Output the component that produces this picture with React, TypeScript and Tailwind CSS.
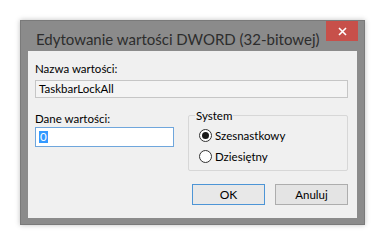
import React from 'react';

const Radio = ({ checked, label }: { checked?: boolean; label: string }) => (
  <div className="flex items-center h-[15px]">
    <span className="w-[13px] h-[13px] rounded-full border border-[#333] bg-white flex items-center justify-center">
      {checked && <span className="w-[7px] h-[7px] rounded-full bg-[#1a1a1a]" />}
    </span>
    <span className="ml-[3px] text-[11.5px] leading-[15px] text-[#000]">{label}</span>
  </div>
);

export default function App() {
  return (
    <div className="w-[385px] h-[246px] bg-white pt-[20px] pl-[20px]" style={{ fontFamily: 'Lato, "Liberation Sans", sans-serif' }}>
      <div className="w-[345px] h-[205px] bg-[#8b8b8b] border border-[#7a7a7a] shadow-[0_0_5px_rgba(0,0,0,0.25)] flex flex-col">
        {/* title bar */}
        <div className="h-[30px] flex items-start">
          <div className="pl-[15px] pt-[8px] text-[15px] leading-[20px] text-[#2d2d2d] flex-1 whitespace-nowrap">
            Edytowanie wartości DWORD (32-bitowej)
          </div>
          <div className="w-[32px] h-[20px] bg-[#c7504a] mr-[6px] flex items-center justify-center shrink-0">
            <svg width="9" height="9" viewBox="0 0 9 9">
              <path d="M1 1L8 8M8 1L1 8" stroke="#fff" strokeWidth="1.6" />
            </svg>
          </div>
        </div>
        {/* client area */}
        <div className="mx-[7px] h-[167px] bg-[#f0f0f0] pl-[7px] pr-[9px] pt-[10px] text-[11.5px]">
          <div className="leading-[15px] text-black">Nazwa wartości:</div>
          <div className="mt-[4px] h-[18px] border border-[#c6c6c6] bg-[#f4f4f4] px-[3px] leading-[16px] text-black">
            TaskbarLockAll
          </div>
          <div className="flex items-start">
            <div className="w-[139px] mt-[13px]">
              <div className="leading-[15px] text-black">Dane wartości:</div>
              <div className="mt-[1px] h-[20px] border border-[#6fa6dc] bg-white px-[3px] flex items-center">
                <span className="bg-[#3399ff] text-white leading-[12px] px-[1px]">0</span>
              </div>
            </div>
            <div className="ml-[14px] mt-[17px] relative w-[160px] h-[56px] border border-[#d7d7d7] rounded-[2px]">
              <span className="absolute -top-[8px] left-[6px] bg-[#f0f0f0] px-[1px] leading-[15px] text-black">System</span>
              <div className="pl-[10px] pt-[12px] flex flex-col gap-[6px]">
                <Radio checked label="Szesnastkowy" />
                <Radio label="Dziesiętny" />
              </div>
            </div>
          </div>
          <div className="flex justify-end gap-[10px] mt-[13px]">
            <button className="w-[73px] h-[21px] border border-[#4d95d6] bg-[#e8e8e8] text-[12px] text-black">OK</button>
            <button className="w-[73px] h-[21px] border border-[#adadad] bg-[#e4e4e4] text-[11.5px] text-black">Anuluj</button>
          </div>
        </div>
      </div>
    </div>
  );
}
